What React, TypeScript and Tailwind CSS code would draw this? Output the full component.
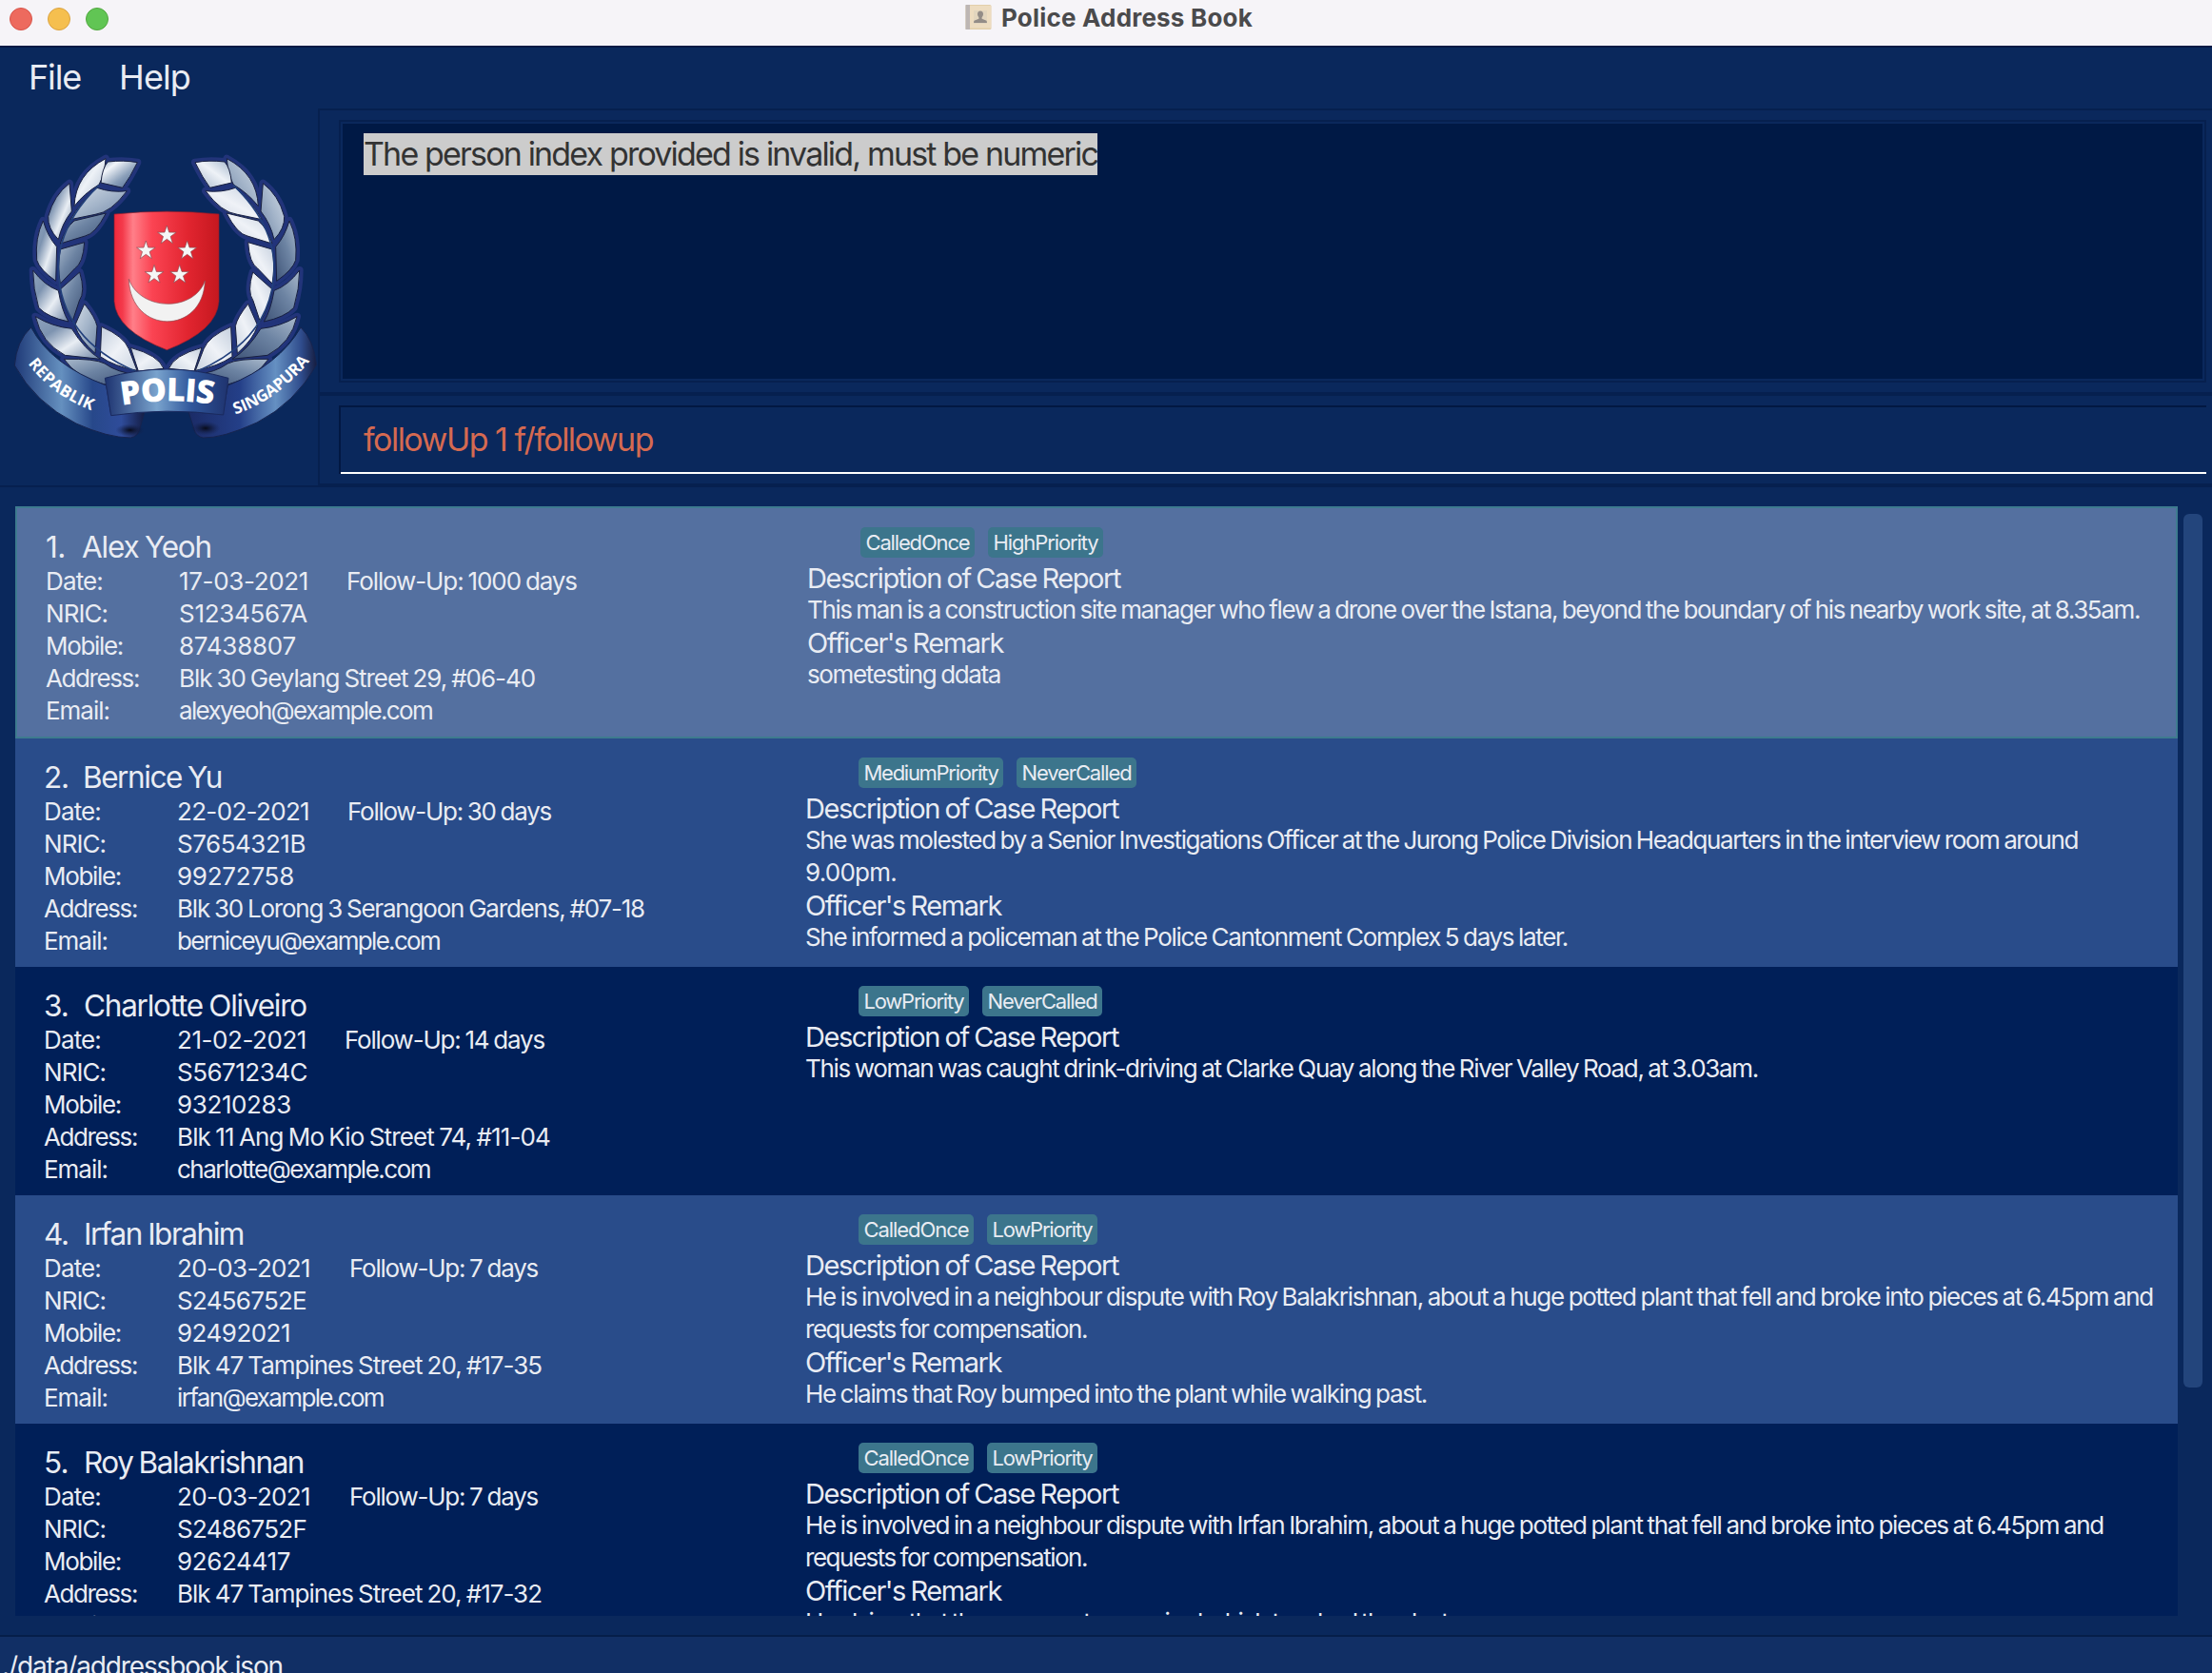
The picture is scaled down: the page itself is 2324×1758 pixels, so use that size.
import { useLayoutEffect, useRef } from "react";
import type { ReactNode } from "react";

/** One line of text whose tracking is adjusted so that it spans `w` pixels. */
function Fit({ w, className = "", children }: { w: number; className?: string; children: string }) {
  const ref = useRef<HTMLSpanElement>(null);
  useLayoutEffect(() => {
    const el = ref.current;
    if (!el) return;
    el.style.letterSpacing = "0px";
    const natural = el.getBoundingClientRect().width;
    el.style.letterSpacing = `${(w - natural) / children.length}px`;
  }, [w, children]);
  return (
    <span className={`block w-max whitespace-pre ${className}`}>
      <span ref={ref}>{children}</span>
    </span>
  );
}

type T = [string, number];

interface Person {
  index: number;
  name: T;
  nameX: string;
  date: T;
  follow: T;
  followX: string;
  nric: T;
  mobile: T;
  address: T;
  email: T;
  tags: T[];
  report: T[];
  remark: T[];
}

const people: Person[] = [
  {
    index: 1,
    name: ["Alex Yeoh", 136],
    nameX: "w-[38px]",
    date: ["17-03-2021", 136],
    follow: ["Follow-Up: 1000 days", 242],
    followX: "w-[176px]",
    nric: ["S1234567A", 135],
    mobile: ["87438807", 123],
    address: ["Blk 30 Geylang Street 29, #06-40", 374],
    email: ["alexyeoh@example.com", 266],
    tags: [["CalledOnce", 109], ["HighPriority", 110]],
    report: [["This man is a construction site manager who flew a drone over the Istana, beyond the boundary of his nearby work site, at 8.35am.", 1400]],
    remark: [["sometesting ddata", 203]],
  },
  {
    index: 2,
    name: ["Bernice Yu", 146],
    nameX: "w-[41px]",
    date: ["22-02-2021", 139],
    follow: ["Follow-Up: 30 days", 214],
    followX: "w-[179px]",
    nric: ["S7654321B", 135],
    mobile: ["99272758", 123],
    address: ["Blk 30 Lorong 3 Serangoon Gardens, #07-18", 491],
    email: ["berniceyu@example.com", 276],
    tags: [["MediumPriority", 141], ["NeverCalled", 115]],
    report: [
      ["She was molested by a Senior Investigations Officer at the Jurong Police Division Headquarters in the interview room around", 1337],
      ["9.00pm.", 96],
    ],
    remark: [["She informed a policeman at the Police Cantonment Complex 5 days later.", 801]],
  },
  {
    index: 3,
    name: ["Charlotte Oliveiro", 234],
    nameX: "w-[42px]",
    date: ["21-02-2021", 136],
    follow: ["Follow-Up: 14 days", 210],
    followX: "w-[176px]",
    nric: ["S5671234C", 137],
    mobile: ["93210283", 120],
    address: ["Blk 11 Ang Mo Kio Street 74, #11-04", 392],
    email: ["charlotte@example.com", 266],
    tags: [["LowPriority", 105], ["NeverCalled", 115]],
    report: [["This woman was caught drink-driving at Clarke Quay along the River Valley Road, at 3.03am.", 1001]],
    remark: [],
  },
  {
    index: 4,
    name: ["Irfan Ibrahim", 168],
    nameX: "w-[42px]",
    date: ["20-03-2021", 140],
    follow: ["Follow-Up: 7 days", 198],
    followX: "w-[181px]",
    nric: ["S2456752E", 136],
    mobile: ["92492021", 119],
    address: ["Blk 47 Tampines Street 20, #17-35", 383],
    email: ["irfan@example.com", 217],
    tags: [["CalledOnce", 110], ["LowPriority", 105]],
    report: [
      ["He is involved in a neighbour dispute with Roy Balakrishnan, about a huge potted plant that fell and broke into pieces at 6.45pm and", 1416],
      ["requests for compensation.", 296],
    ],
    remark: [["He claims that Roy bumped into the plant while walking past.", 653]],
  },
  {
    index: 5,
    name: ["Roy Balakrishnan", 231],
    nameX: "w-[42px]",
    date: ["20-03-2021", 140],
    follow: ["Follow-Up: 7 days", 198],
    followX: "w-[181px]",
    nric: ["S2486752F", 136],
    mobile: ["92624417", 119],
    address: ["Blk 47 Tampines Street 20, #17-32", 383],
    email: ["royb@example.com", 216],
    tags: [["CalledOnce", 110], ["LowPriority", 105]],
    report: [
      ["He is involved in a neighbour dispute with Irfan Ibrahim, about a huge potted plant that fell and broke into pieces at 6.45pm and", 1364],
      ["requests for compensation.", 296],
    ],
    remark: [["He claims that there was a stray squirrel which touched the plant.", 681]],
  },
];

function Field({ label, w, children }: { label: string; w: number; children: ReactNode }) {
  return (
    <div className="flex h-[34px] leading-[34px]">
      <div className="w-[140px]">
        <Fit w={w}>{label}</Fit>
      </div>
      {children}
    </div>
  );
}

function Section({ title, w, lines }: { title: string; w: number; lines: T[] }) {
  return (
    <div>
      <Fit w={w} className="h-[34px] text-[29px] leading-[36px]">
        {title}
      </Fit>
      {lines.map(([text, width]) => (
        <Fit key={text} w={width} className="h-[34px] leading-[34px]">
          {text}
        </Fit>
      ))}
    </div>
  );
}

function PersonCard({ p }: { p: Person }) {
  const selected = p.index === 1;
  const tone = selected
    ? "h-[244px] border-2 border-[#3e7b8f] bg-[#5470a0]"
    : p.index % 2 === 0
      ? "h-[240px] bg-[#294c8a]"
      : "h-[240px] bg-[#001f58]";
  return (
    <li
      className={`flex shrink-0 overflow-hidden text-[26px] text-[#e9ecf3] [word-spacing:-1.2px] ${tone}`}
    >
      <div className="w-[830px] shrink-0 pt-5 pl-[30px]">
        <div className="flex h-10 text-[31.5px] leading-[42px]">
          <div className={p.nameX}>
            <Fit w={p.index === 1 ? 21 : 26}>{`${p.index}.`}</Fit>
          </div>
          <Fit w={p.name[1]}>{p.name[0]}</Fit>
        </div>
        <Field label="Date:" w={60}>
          <div className={p.followX}>
            <Fit w={p.date[1]}>{p.date[0]}</Fit>
          </div>
          <Fit w={p.follow[1]}>{p.follow[0]}</Fit>
        </Field>
        <Field label="NRIC:" w={65}>
          <Fit w={p.nric[1]}>{p.nric[0]}</Fit>
        </Field>
        <Field label="Mobile:" w={81}>
          <Fit w={p.mobile[1]}>{p.mobile[0]}</Fit>
        </Field>
        <Field label="Address:" w={98}>
          <Fit w={p.address[1]}>{p.address[0]}</Fit>
        </Field>
        <Field label="Email:" w={67}>
          <Fit w={p.email[1]}>{p.email[0]}</Fit>
        </Field>
      </div>
      <div className="pt-5">
        <div className="mb-1 ml-[56px] flex h-8 gap-[14px]">
          {p.tags.map(([text, w]) => (
            <div
              key={text}
              className="h-8 rounded-[5px] bg-[#3c758c] px-[5.5px] text-[22px] leading-8"
            >
              <Fit w={w}>{text}</Fit>
            </div>
          ))}
        </div>
        <Section title="Description of Case Report" w={329} lines={p.report} />
        {p.remark.length > 0 && <Section title="Officer's Remark" w={206} lines={p.remark} />}
      </div>
    </li>
  );
}

/** Leaf outlines with their fills on the left and the right branch. */
const leaves: [string, string, string][] = [
  ["M333 80 Q330 130 312 162 Q265 190 234 230 Q238 130 333 80Z", "url(#leafA)", "url(#leafE)"],
  ["M340 90 Q390 84 433 92 Q410 140 386 172 L318 156 Q322 110 340 90Z", "url(#leafB)", "url(#leafA)"],
  ["M219 158 L226 246 Q195 285 184 335 Q150 300 152 262 Q170 195 219 158Z", "url(#leafC)", "url(#leafE)"],
  ["M306 172 Q350 188 400 182 Q350 250 300 256 L222 272 Q255 215 306 172Z", "url(#leafE)", "url(#leafF)"],
  ["M136 276 Q150 325 179 358 L176 466 Q125 430 116 400 Q110 330 136 276Z", "url(#leafC)", "url(#leafD)"],
  ["M334 252 Q300 318 268 324 L190 348 Q205 300 234 276Z", "url(#leafD)", "url(#leafF)"],
  ["M104 432 Q140 480 184 496 Q195 560 216 594 Q150 580 122 550 Q104 490 104 432Z", "url(#leafC)", "url(#leafD)"],
  ["M266 344 Q262 410 236 426 L190 474 Q180 420 190 366Z", "url(#leafD)", "url(#leafF)"],
  ["M251 438 Q270 500 250 528 L228 594 Q200 550 190 492Z", "url(#leafD)", "url(#leafF)"],
  ["M112 578 Q165 610 226 616 Q265 680 316 712 L205 700 Q130 660 112 578Z", "url(#leafC)", "url(#leafD)"],
  ["M266 538 Q300 580 306 608 L300 694 Q250 650 236 606Z", "url(#leafE)", "url(#leafF)"],
  ["M320 610 Q390 640 406 680 L432 748 Q360 735 316 704Z", "url(#leafF)", "url(#leafF)"],
  ["M412 676 Q500 700 516 742 L436 750Z", "url(#leafF)", "url(#leafF)"],
  ["M202 712 Q300 710 330 726 Q370 755 430 760 L330 792 Q240 770 202 712Z", "url(#leafD)", "url(#leafD)"],
];

function star(cx: number, cy: number) {
  return Array.from({ length: 10 }, (_, i) => {
    const r = i % 2 === 0 ? 31 : 12;
    const a = (Math.PI / 5) * i - Math.PI / 2;
    return `${cx + r * Math.cos(a)},${cy + r * Math.sin(a)}`;
  }).join(" ");
}

function Branch({ side }: { side: 1 | 2 }) {
  return (
    <>
      <g stroke="#22347a" strokeWidth="24" strokeLinejoin="round" fill="#1b2a63">
        {leaves.map((l) => (
          <path key={l[0]} d={l[0]} />
        ))}
      </g>
      {leaves.map((l) => (
        <path key={l[0]} d={l[0]} fill={l[side]} stroke="#18203f" strokeWidth="3" />
      ))}
      <path d="M312 164 Q182 290 184 430 Q190 650 430 752" fill="none" stroke="#22407c" strokeWidth="5" />
    </>
  );
}

function Crest() {
  return (
    <svg viewBox="0 0 1002 1020" className="h-[340px] w-[334px]">
      <defs>
        <linearGradient id="leafA" x1="0" y1="0" x2="1" y2="1">
          <stop offset="0" stopColor="#a3b6cb" />
          <stop offset=".45" stopColor="#eef2f7" />
          <stop offset="1" stopColor="#a5b5ca" />
        </linearGradient>
        <linearGradient id="leafB" x1="0" y1="0" x2="1" y2="1">
          <stop offset="0" stopColor="#8fa5be" />
          <stop offset=".25" stopColor="#f2f5f9" />
          <stop offset=".6" stopColor="#8ba0ba" />
          <stop offset="1" stopColor="#45608a" />
        </linearGradient>
        <linearGradient id="leafC" x1="0" y1="0" x2="1" y2="1">
          <stop offset="0" stopColor="#8ea3bd" />
          <stop offset=".3" stopColor="#7d93b0" />
          <stop offset=".6" stopColor="#e9eef4" />
          <stop offset="1" stopColor="#6b82a3" />
        </linearGradient>
        <linearGradient id="leafD" x1="0" y1="0" x2="1" y2="1">
          <stop offset="0" stopColor="#a9b9cc" />
          <stop offset=".45" stopColor="#6d84a3" />
          <stop offset="1" stopColor="#3f5478" />
        </linearGradient>
        <linearGradient id="leafE" x1="0" y1="0" x2="1" y2="1">
          <stop offset="0" stopColor="#d3dce7" />
          <stop offset=".5" stopColor="#a3b4c9" />
          <stop offset="1" stopColor="#6f86a6" />
        </linearGradient>
        <linearGradient id="leafF" x1="0" y1="0" x2="1" y2="1">
          <stop offset="0" stopColor="#c3cedd" />
          <stop offset=".5" stopColor="#eff2f7" />
          <stop offset="1" stopColor="#c9d3e0" />
        </linearGradient>
        <linearGradient id="shield" x1="0" x2="1">
          <stop offset="0" stopColor="#f0283c" />
          <stop offset=".08" stopColor="#f43a4b" />
          <stop offset=".18" stopColor="#ff7f89" />
          <stop offset=".36" stopColor="#fb4453" />
          <stop offset=".7" stopColor="#e22530" />
          <stop offset="1" stopColor="#c5181f" />
        </linearGradient>
        <linearGradient id="ribbonL" x1="0" x2="1">
          <stop offset="0" stopColor="#1f3a78" />
          <stop offset=".36" stopColor="#6590bf" />
          <stop offset=".6" stopColor="#27488a" />
          <stop offset=".82" stopColor="#2f4c9a" />
          <stop offset="1" stopColor="#141d45" />
        </linearGradient>
        <linearGradient id="ribbonR" x1="0" x2="1">
          <stop offset="0" stopColor="#1b2b66" />
          <stop offset=".4" stopColor="#243f88" />
          <stop offset=".68" stopColor="#6590c2" />
          <stop offset=".88" stopColor="#2f4c8c" />
          <stop offset="1" stopColor="#161d40" />
        </linearGradient>
        <linearGradient id="ribbonC" x1="0" x2="1">
          <stop offset="0" stopColor="#1d3370" />
          <stop offset=".42" stopColor="#79a3cd" />
          <stop offset=".7" stopColor="#2f569b" />
          <stop offset="1" stopColor="#1f336f" />
        </linearGradient>
        <radialGradient id="curl">
          <stop offset="0" stopColor="#070a18" />
          <stop offset="1" stopColor="#14204c" stopOpacity="0" />
        </radialGradient>
        <path id="arcL" d="M88 726 Q165 830 300 878" />
        <path id="arcR" d="M742 886 Q880 840 984 708" />
        <path id="arcC" d="M384 858 Q526 832 676 856" />
      </defs>
      <Branch side={1} />
      <g transform="translate(1048 0) scale(-1 1)">
        <Branch side={2} />
      </g>
      <path
        d="M98 612 Q52 655 46 732 Q110 850 240 915 Q340 960 412 960 Q434 956 440 934 L456 878 L350 885 L335 795 Q160 730 98 612Z"
        fill="url(#ribbonL)"
        stroke="#16244f"
        strokeWidth="3"
      />
      <ellipse cx="410" cy="936" rx="46" ry="20" fill="url(#curl)" />
      <path
        d="M948 612 Q988 650 998 730 Q930 850 810 912 Q700 962 640 960 Q618 956 612 934 L594 878 L702 885 L718 795 Q880 730 948 612Z"
        fill="url(#ribbonR)"
        stroke="#16244f"
        strokeWidth="3"
      />
      <ellipse cx="648" cy="930" rx="46" ry="22" fill="url(#curl)" />
      <path d="M331 772 Q525 716 720 772 L704 888 Q525 864 350 890Z" fill="url(#ribbonC)" stroke="#1a2a5f" strokeWidth="3" />
      <path
        d="M360 255 Q526 238 690 255 V530 Q684 622 526 683 Q366 622 360 530Z"
        fill="url(#shield)"
        stroke="#8f1d2b"
        strokeWidth="2"
      />
      {[[526, 322], [460, 370], [590, 370], [486, 446], [566, 446]].map(([x, y]) => (
        <polygon key={x} points={star(x, y)} fill="#f6f6f6" stroke="#8b4a50" strokeWidth="2" />
      ))}
      <path
        d="M406 460 C412 637 640 637 646 465 C612 563 444 563 406 460Z"
        fill="#f2f2f2"
        stroke="#8b4a50"
        strokeWidth="2"
      />
      <g fill="#fff" className="font-['Open_Sans',sans-serif] font-bold">
        <text fontSize="51">
          <textPath href="#arcL" textLength="252">REPABLIK</textPath>
        </text>
        <text fontSize="51">
          <textPath href="#arcR" textLength="292">SINGAPURA</textPath>
        </text>
        <text fontSize="102" className="font-extrabold">
          <textPath href="#arcC" textLength="290">POLIS</textPath>
        </text>
      </g>
    </svg>
  );
}

function BookIcon() {
  return (
    <svg viewBox="0 0 28 28" className="size-7">
      <rect x="0.5" y="1" width="27" height="26" rx="1.5" fill="#e3cfaa" />
      <rect x="5" y="2" width="22" height="23.5" fill="#eddcc0" />
      <rect x="0.5" y="1" width="4.5" height="26" fill="#bdb6b4" />
      <rect x="9" y="7" width="14" height="14" fill="#e2d5be" />
      <path d="M16 7.500c2 0 3 1.400 3 3.300 0 1.500-.7 2.700-1.400 3.400v1.500l4.400 1.800c.7.300.9.800.9 2.500h-13.800c0-1.700.2-2.200.9-2.500l4.400-1.800v-1.500c-.7-.7-1.400-1.900-1.400-3.400C13 8.900 14 7.500 16 7.500z" fill="#938c87" />
    </svg>
  );
}

export default function App() {
  return (
    <div className="flex h-[1758px] w-[2324px] flex-col overflow-hidden bg-[#0a285c] font-[Inter,sans-serif]">
      <header className="flex h-12 shrink-0 bg-[#f6f4f8]">
        <div className="flex w-[1014px] gap-4 pt-2 pl-[10px]">
          <span className="size-6 rounded-full border border-[#d8544a] bg-[#ed6a5e]" />
          <span className="size-6 rounded-full border border-[#dba240] bg-[#f5bf4f]" />
          <span className="size-6 rounded-full border border-[#51a73f] bg-[#61c554]" />
        </div>
        <div className="flex gap-[10px] pt-1">
          <BookIcon />
          <Fit w={264} className="text-[26px] leading-[30px] font-bold text-[#4a4a4c]">
            Police Address Book
          </Fit>
        </div>
      </header>

      <nav className="flex h-[66px] shrink-0 border-t-2 border-[#051a45] pl-[30px] text-[36px] leading-[62px] text-[#e9ecf3]">
        <div className="w-[95px]">
          <Fit w={55}>File</Fit>
        </div>
        <Fit w={75}>Help</Fit>
      </nav>

      <div className="flex h-[396px] shrink-0">
        <div className="w-[334px] shrink-0 pt-[26px]">
          <Crest />
        </div>
        <div className="flex flex-1 flex-col">
          <div className="h-[300px] border-y-2 border-l-2 border-[#06204f] pt-[10px] pr-[6px] pl-5">
            <div className="h-[276px] border-2 border-[#06204f] p-[2px]">
              <div className="h-[268px] bg-[#001945] pt-[10px] pl-[22px]">
                <div className="h-11 w-[771px] bg-[#cccccc] text-[34px] leading-[43px] text-[#333333]">
                  <Fit w={771}>The person index provided is invalid, must be numeric</Fit>
                </div>
              </div>
            </div>
          </div>
          <div className="h-24 border-y-2 border-l-2 border-[#06204f] pt-[10px] pr-[6px] pl-5">
            <div className="flex h-[72px] border-l-2 border-[#021842]">
              <div className="flex-1 border-t-2 border-b-2 border-t-[#021842] border-b-white pl-6 text-[34px] leading-[68px] text-[#d56a51]">
                <Fit w={304}>followUp 1 f/followup</Fit>
              </div>
            </div>
          </div>
        </div>
      </div>

      <main className="flex h-[1208px] shrink-0 border-t-2 border-[#06204f] pt-5 pl-4">
        <ul className="flex h-[1166px] w-[2272px] flex-col overflow-hidden">
          {people.map((p) => (
            <PersonCard key={p.index} p={p} />
          ))}
        </ul>
        <div className="mt-2 ml-[6px] h-[918px] w-5 rounded-[6px] bg-[#23457c]" />
      </main>

      <footer className="h-10 shrink-0 border-t-2 border-[#051e4a] bg-[#112f65] pt-[11px] pl-[2px] text-[28px] leading-[40px] text-[#e9ecf3]">
        <Fit w={295}>./data/addressbook.json</Fit>
      </footer>
    </div>
  );
}
